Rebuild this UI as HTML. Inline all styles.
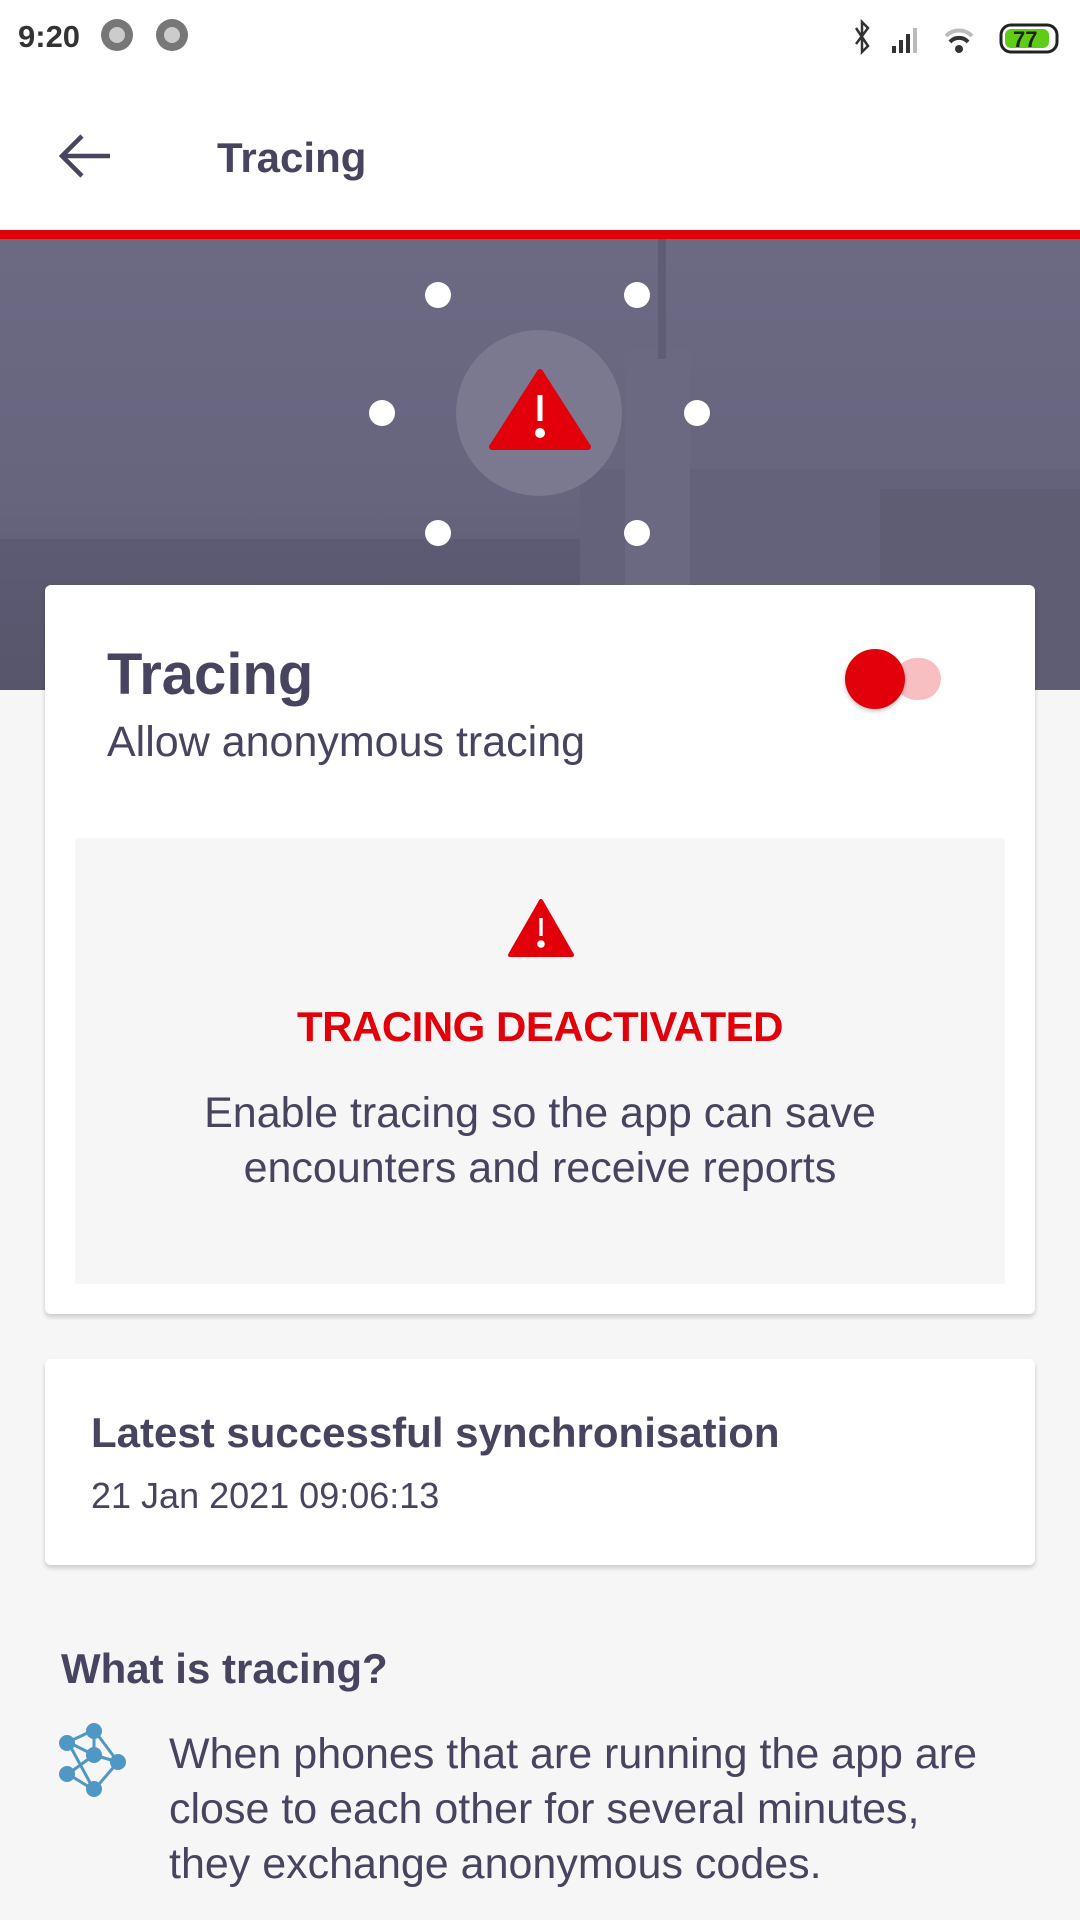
<!DOCTYPE html>
<html><head><meta charset="utf-8"><style>
*{margin:0;padding:0;box-sizing:border-box}
body{width:1080px;height:1920px;background:#f6f6f6;font-family:"Liberation Sans",sans-serif;color:#46445f;position:relative;overflow:hidden}
.abs{position:absolute}
.card{position:absolute;background:#fff;border-radius:6px;box-shadow:0 3px 5px rgba(0,0,0,.18)}
</style></head><body>
<div class="abs" style="left:0;top:0;width:1080px;height:230px;background:#fff"></div>
<div class="abs" style="left:18px;top:19px;font-size:31px;font-weight:bold;color:#333">9:20</div>
<div class="abs" style="left:101px;top:19px;width:32px;height:32px;border-radius:50%;background:#777"><div style="margin:8px;width:16px;height:16px;border-radius:50%;background:#ccc"></div></div>
<div class="abs" style="left:156px;top:19px;width:32px;height:32px;border-radius:50%;background:#777"><div style="margin:8px;width:16px;height:16px;border-radius:50%;background:#ccc"></div></div>
<svg class="abs" style="left:850px;top:18px" width="215" height="40" viewBox="0 0 215 40">
<path d="M6 10 L18 28 L12 34 V4 L18 10 L6 26" fill="none" stroke="#333" stroke-width="2.5"/>
<rect x="42" y="28" width="4" height="7" fill="#333"/><rect x="49" y="22" width="4" height="13" fill="#333"/><rect x="56" y="16" width="4" height="19" fill="#333"/><rect x="63" y="10" width="4" height="25" fill="#bbb"/>
<path d="M96 18 a18 18 0 0 1 26 0" fill="none" stroke="#bbb" stroke-width="4"/><path d="M100 24 a12 12 0 0 1 18 0" fill="none" stroke="#333" stroke-width="4"/><circle cx="109" cy="31" r="4" fill="#333"/>
<rect x="151" y="7" width="56" height="27" rx="10" fill="none" stroke="#222" stroke-width="3"/><rect x="155" y="11" width="44" height="19" rx="6" fill="#5fcc18"/><text x="163" y="29" font-size="22" font-weight="bold" fill="#222" font-family="Liberation Sans">77</text>
</svg>
<svg class="abs" style="left:58px;top:134px" width="54" height="44" viewBox="0 0 54 44"><path d="M52 22 H4 M24 2 L4 22 L24 42" fill="none" stroke="#46445f" stroke-width="4.5"/></svg>
<div class="abs" style="left:217px;top:134px;font-size:42px;font-weight:bold;color:#46445f">Tracing</div>
<div class="abs" style="left:0;top:230px;width:1080px;height:9px;background:#e2000a"></div>
<div class="abs" style="left:0;top:239px;width:1080px;height:451px;background:linear-gradient(180deg,#6c6a83 0%,#67657e 55%,#5c5a72 100%);overflow:hidden">
<div class="abs" style="left:0;top:300px;width:1080px;height:151px;background:linear-gradient(180deg,#5d5b73,#57556c)"></div>
<div class="abs" style="left:580px;top:230px;width:500px;height:221px;background:#64627a"></div>
<div class="abs" style="left:625px;top:110px;width:65px;height:341px;background:#6b6982"></div>
<div class="abs" style="left:658px;top:0;width:8px;height:120px;background:#5f5d76"></div>
<div class="abs" style="left:880px;top:250px;width:200px;height:200px;background:#5f5d74"></div>
</div>
<div class="abs" style="left:456px;top:330px;width:166px;height:166px;border-radius:50%;background:#7b7990"></div>
<svg class="abs" style="left:488px;top:369px" width="104" height="82" viewBox="0 0 104 82"><path d="M52 3 L100 78 H4 Z" fill="#e2000a" stroke="#e2000a" stroke-width="6" stroke-linejoin="round"/><rect x="49.5" y="26" width="5" height="26" fill="#fff"/><circle cx="52" cy="64" r="5" fill="#fff"/></svg>
<div class="abs" style="left:425px;top:282px;width:26px;height:26px;border-radius:50%;background:#fff"></div>
<div class="abs" style="left:624px;top:282px;width:26px;height:26px;border-radius:50%;background:#fff"></div>
<div class="abs" style="left:369px;top:400px;width:26px;height:26px;border-radius:50%;background:#fff"></div>
<div class="abs" style="left:684px;top:400px;width:26px;height:26px;border-radius:50%;background:#fff"></div>
<div class="abs" style="left:425px;top:520px;width:26px;height:26px;border-radius:50%;background:#fff"></div>
<div class="abs" style="left:624px;top:520px;width:26px;height:26px;border-radius:50%;background:#fff"></div>

<div class="card" style="left:45px;top:585px;width:990px;height:729px">
<div class="abs" style="left:62px;top:56px;font-size:58px;font-weight:bold;color:#46445f">Tracing</div>
<div class="abs" style="left:62px;top:133px;font-size:43px;color:#46445f">Allow anonymous tracing</div>
<div class="abs" style="left:850px;top:73px;width:46px;height:42px;border-radius:21px;background:#f7bfc1"></div>
<div class="abs" style="left:800px;top:64px;width:60px;height:60px;border-radius:50%;background:#e2000a;box-shadow:0 2px 4px rgba(0,0,0,.25)"></div>
<div class="abs" style="left:30px;top:253px;width:930px;height:446px;background:#f6f6f6;text-align:center">
<svg class="abs" style="left:432px;top:60px" width="68" height="60" viewBox="0 0 68 60"><path d="M34 3 L65 57 H3 Z" fill="#e2000a" stroke="#e2000a" stroke-width="4" stroke-linejoin="round"/><rect x="32.3" y="20" width="3.4" height="18" fill="#fff"/><circle cx="34" cy="46" r="3.8" fill="#fff"/></svg>
<div class="abs" style="left:0;width:930px;top:165px;font-size:42px;font-weight:bold;color:#e2000a;letter-spacing:-0.5px">TRACING DEACTIVATED</div>
<div class="abs" style="left:0;width:930px;top:248px;font-size:43px;line-height:55px;color:#46445f">Enable tracing so the app can save<br>encounters and receive reports</div>
</div>
</div>

<div class="card" style="left:45px;top:1359px;width:990px;height:206px">
<div class="abs" style="left:46px;top:50px;font-size:42px;font-weight:bold;color:#46445f">Latest successful synchronisation</div>
<div class="abs" style="left:46px;top:116px;font-size:36px;color:#46445f">21 Jan 2021 09:06:13</div>
</div>

<div class="abs" style="left:61px;top:1645px;font-size:42px;font-weight:bold;color:#46445f">What is tracing?</div>
<svg class="abs" style="left:56px;top:1722px" width="72" height="76" viewBox="0 0 72 76">
<g stroke="#4f97c4" stroke-width="3" fill="none"><path d="M38 8 L12 20 L38 33 L12 52 L38 68 L62 40 L38 8 M12 20 L38 68 M38 33 L62 40 M38 8 L38 33 M12 52 L38 33"/></g>
<g fill="#4f97c4"><circle cx="38" cy="9" r="8"/><circle cx="11" cy="21" r="8"/><circle cx="38" cy="33" r="8"/><circle cx="62" cy="40" r="8"/><circle cx="11" cy="52" r="8"/><circle cx="38" cy="67" r="8"/></g>
</svg>
<div class="abs" style="left:169px;top:1727px;font-size:43px;line-height:55px;color:#46445f">When phones that are running the app are<br>close to each other for several minutes,<br>they exchange anonymous codes.</div>
</body></html>
